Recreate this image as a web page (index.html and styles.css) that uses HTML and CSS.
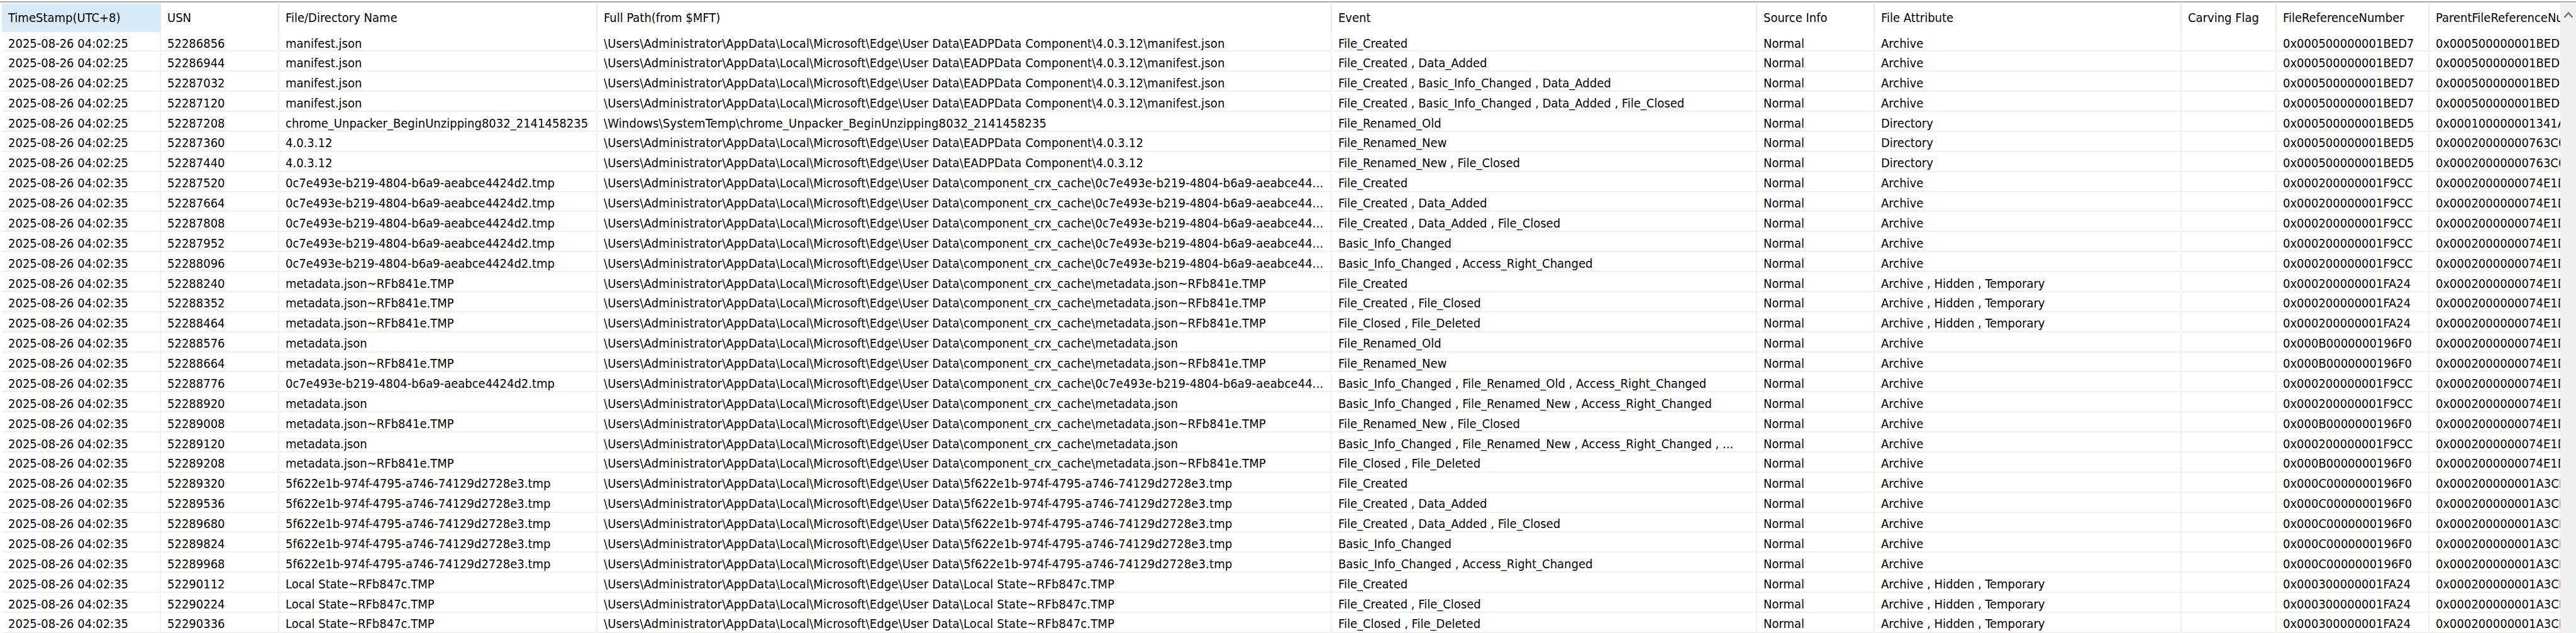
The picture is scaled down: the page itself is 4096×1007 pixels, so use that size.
FILE: index.html
```html
<!DOCTYPE html>
<html lang="en">
<head>
<meta charset="utf-8">
<title>USN Journal</title>
<link rel="stylesheet" href="styles.css">
</head>
<body>
<div class="topline"></div>
<div class="view">
<div class="table">
<div class="row head"><div class="cell sel">TimeStamp(UTC+8)</div><div class="cell">USN</div><div class="cell">File/Directory Name</div><div class="cell">Full Path(from $MFT)</div><div class="cell">Event</div><div class="cell">Source Info</div><div class="cell">File Attribute</div><div class="cell">Carving Flag</div><div class="cell">FileReferenceNumber</div><div class="cell">ParentFileReferenceNumber</div></div>
<div class="row"><div class="cell">2025-08-26 04:02:25</div><div class="cell">52286856</div><div class="cell">manifest.json</div><div class="cell">\Users\Administrator\AppData\Local\Microsoft\Edge\User Data\EADPData Component\4.0.3.12\manifest.json</div><div class="cell">File_Created</div><div class="cell">Normal</div><div class="cell">Archive</div><div class="cell"></div><div class="cell">0x000500000001BED7</div><div class="cell">0x000500000001BED5</div></div>
<div class="row"><div class="cell">2025-08-26 04:02:25</div><div class="cell">52286944</div><div class="cell">manifest.json</div><div class="cell">\Users\Administrator\AppData\Local\Microsoft\Edge\User Data\EADPData Component\4.0.3.12\manifest.json</div><div class="cell">File_Created , Data_Added</div><div class="cell">Normal</div><div class="cell">Archive</div><div class="cell"></div><div class="cell">0x000500000001BED7</div><div class="cell">0x000500000001BED5</div></div>
<div class="row"><div class="cell">2025-08-26 04:02:25</div><div class="cell">52287032</div><div class="cell">manifest.json</div><div class="cell">\Users\Administrator\AppData\Local\Microsoft\Edge\User Data\EADPData Component\4.0.3.12\manifest.json</div><div class="cell">File_Created , Basic_Info_Changed , Data_Added</div><div class="cell">Normal</div><div class="cell">Archive</div><div class="cell"></div><div class="cell">0x000500000001BED7</div><div class="cell">0x000500000001BED5</div></div>
<div class="row"><div class="cell">2025-08-26 04:02:25</div><div class="cell">52287120</div><div class="cell">manifest.json</div><div class="cell">\Users\Administrator\AppData\Local\Microsoft\Edge\User Data\EADPData Component\4.0.3.12\manifest.json</div><div class="cell">File_Created , Basic_Info_Changed , Data_Added , File_Closed</div><div class="cell">Normal</div><div class="cell">Archive</div><div class="cell"></div><div class="cell">0x000500000001BED7</div><div class="cell">0x000500000001BED5</div></div>
<div class="row"><div class="cell">2025-08-26 04:02:25</div><div class="cell">52287208</div><div class="cell">chrome_Unpacker_BeginUnzipping8032_2141458235</div><div class="cell">\Windows\SystemTemp\chrome_Unpacker_BeginUnzipping8032_2141458235</div><div class="cell">File_Renamed_Old</div><div class="cell">Normal</div><div class="cell">Directory</div><div class="cell"></div><div class="cell">0x000500000001BED5</div><div class="cell">0x000100000001341A</div></div>
<div class="row"><div class="cell">2025-08-26 04:02:25</div><div class="cell">52287360</div><div class="cell">4.0.3.12</div><div class="cell">\Users\Administrator\AppData\Local\Microsoft\Edge\User Data\EADPData Component\4.0.3.12</div><div class="cell">File_Renamed_New</div><div class="cell">Normal</div><div class="cell">Directory</div><div class="cell"></div><div class="cell">0x000500000001BED5</div><div class="cell">0x00020000000763C0</div></div>
<div class="row"><div class="cell">2025-08-26 04:02:25</div><div class="cell">52287440</div><div class="cell">4.0.3.12</div><div class="cell">\Users\Administrator\AppData\Local\Microsoft\Edge\User Data\EADPData Component\4.0.3.12</div><div class="cell">File_Renamed_New , File_Closed</div><div class="cell">Normal</div><div class="cell">Directory</div><div class="cell"></div><div class="cell">0x000500000001BED5</div><div class="cell">0x00020000000763C0</div></div>
<div class="row"><div class="cell">2025-08-26 04:02:35</div><div class="cell">52287520</div><div class="cell">0c7e493e-b219-4804-b6a9-aeabce4424d2.tmp</div><div class="cell">\Users\Administrator\AppData\Local\Microsoft\Edge\User Data\component_crx_cache\0c7e493e-b219-4804-b6a9-aeabce44...</div><div class="cell">File_Created</div><div class="cell">Normal</div><div class="cell">Archive</div><div class="cell"></div><div class="cell">0x000200000001F9CC</div><div class="cell">0x0002000000074E1D</div></div>
<div class="row"><div class="cell">2025-08-26 04:02:35</div><div class="cell">52287664</div><div class="cell">0c7e493e-b219-4804-b6a9-aeabce4424d2.tmp</div><div class="cell">\Users\Administrator\AppData\Local\Microsoft\Edge\User Data\component_crx_cache\0c7e493e-b219-4804-b6a9-aeabce44...</div><div class="cell">File_Created , Data_Added</div><div class="cell">Normal</div><div class="cell">Archive</div><div class="cell"></div><div class="cell">0x000200000001F9CC</div><div class="cell">0x0002000000074E1D</div></div>
<div class="row"><div class="cell">2025-08-26 04:02:35</div><div class="cell">52287808</div><div class="cell">0c7e493e-b219-4804-b6a9-aeabce4424d2.tmp</div><div class="cell">\Users\Administrator\AppData\Local\Microsoft\Edge\User Data\component_crx_cache\0c7e493e-b219-4804-b6a9-aeabce44...</div><div class="cell">File_Created , Data_Added , File_Closed</div><div class="cell">Normal</div><div class="cell">Archive</div><div class="cell"></div><div class="cell">0x000200000001F9CC</div><div class="cell">0x0002000000074E1D</div></div>
<div class="row"><div class="cell">2025-08-26 04:02:35</div><div class="cell">52287952</div><div class="cell">0c7e493e-b219-4804-b6a9-aeabce4424d2.tmp</div><div class="cell">\Users\Administrator\AppData\Local\Microsoft\Edge\User Data\component_crx_cache\0c7e493e-b219-4804-b6a9-aeabce44...</div><div class="cell">Basic_Info_Changed</div><div class="cell">Normal</div><div class="cell">Archive</div><div class="cell"></div><div class="cell">0x000200000001F9CC</div><div class="cell">0x0002000000074E1D</div></div>
<div class="row"><div class="cell">2025-08-26 04:02:35</div><div class="cell">52288096</div><div class="cell">0c7e493e-b219-4804-b6a9-aeabce4424d2.tmp</div><div class="cell">\Users\Administrator\AppData\Local\Microsoft\Edge\User Data\component_crx_cache\0c7e493e-b219-4804-b6a9-aeabce44...</div><div class="cell">Basic_Info_Changed , Access_Right_Changed</div><div class="cell">Normal</div><div class="cell">Archive</div><div class="cell"></div><div class="cell">0x000200000001F9CC</div><div class="cell">0x0002000000074E1D</div></div>
<div class="row"><div class="cell">2025-08-26 04:02:35</div><div class="cell">52288240</div><div class="cell">metadata.json~RFb841e.TMP</div><div class="cell">\Users\Administrator\AppData\Local\Microsoft\Edge\User Data\component_crx_cache\metadata.json~RFb841e.TMP</div><div class="cell">File_Created</div><div class="cell">Normal</div><div class="cell">Archive , Hidden , Temporary</div><div class="cell"></div><div class="cell">0x000200000001FA24</div><div class="cell">0x0002000000074E1D</div></div>
<div class="row"><div class="cell">2025-08-26 04:02:35</div><div class="cell">52288352</div><div class="cell">metadata.json~RFb841e.TMP</div><div class="cell">\Users\Administrator\AppData\Local\Microsoft\Edge\User Data\component_crx_cache\metadata.json~RFb841e.TMP</div><div class="cell">File_Created , File_Closed</div><div class="cell">Normal</div><div class="cell">Archive , Hidden , Temporary</div><div class="cell"></div><div class="cell">0x000200000001FA24</div><div class="cell">0x0002000000074E1D</div></div>
<div class="row"><div class="cell">2025-08-26 04:02:35</div><div class="cell">52288464</div><div class="cell">metadata.json~RFb841e.TMP</div><div class="cell">\Users\Administrator\AppData\Local\Microsoft\Edge\User Data\component_crx_cache\metadata.json~RFb841e.TMP</div><div class="cell">File_Closed , File_Deleted</div><div class="cell">Normal</div><div class="cell">Archive , Hidden , Temporary</div><div class="cell"></div><div class="cell">0x000200000001FA24</div><div class="cell">0x0002000000074E1D</div></div>
<div class="row"><div class="cell">2025-08-26 04:02:35</div><div class="cell">52288576</div><div class="cell">metadata.json</div><div class="cell">\Users\Administrator\AppData\Local\Microsoft\Edge\User Data\component_crx_cache\metadata.json</div><div class="cell">File_Renamed_Old</div><div class="cell">Normal</div><div class="cell">Archive</div><div class="cell"></div><div class="cell">0x000B0000000196F0</div><div class="cell">0x0002000000074E1D</div></div>
<div class="row"><div class="cell">2025-08-26 04:02:35</div><div class="cell">52288664</div><div class="cell">metadata.json~RFb841e.TMP</div><div class="cell">\Users\Administrator\AppData\Local\Microsoft\Edge\User Data\component_crx_cache\metadata.json~RFb841e.TMP</div><div class="cell">File_Renamed_New</div><div class="cell">Normal</div><div class="cell">Archive</div><div class="cell"></div><div class="cell">0x000B0000000196F0</div><div class="cell">0x0002000000074E1D</div></div>
<div class="row"><div class="cell">2025-08-26 04:02:35</div><div class="cell">52288776</div><div class="cell">0c7e493e-b219-4804-b6a9-aeabce4424d2.tmp</div><div class="cell">\Users\Administrator\AppData\Local\Microsoft\Edge\User Data\component_crx_cache\0c7e493e-b219-4804-b6a9-aeabce44...</div><div class="cell">Basic_Info_Changed , File_Renamed_Old , Access_Right_Changed</div><div class="cell">Normal</div><div class="cell">Archive</div><div class="cell"></div><div class="cell">0x000200000001F9CC</div><div class="cell">0x0002000000074E1D</div></div>
<div class="row"><div class="cell">2025-08-26 04:02:35</div><div class="cell">52288920</div><div class="cell">metadata.json</div><div class="cell">\Users\Administrator\AppData\Local\Microsoft\Edge\User Data\component_crx_cache\metadata.json</div><div class="cell">Basic_Info_Changed , File_Renamed_New , Access_Right_Changed</div><div class="cell">Normal</div><div class="cell">Archive</div><div class="cell"></div><div class="cell">0x000200000001F9CC</div><div class="cell">0x0002000000074E1D</div></div>
<div class="row"><div class="cell">2025-08-26 04:02:35</div><div class="cell">52289008</div><div class="cell">metadata.json~RFb841e.TMP</div><div class="cell">\Users\Administrator\AppData\Local\Microsoft\Edge\User Data\component_crx_cache\metadata.json~RFb841e.TMP</div><div class="cell">File_Renamed_New , File_Closed</div><div class="cell">Normal</div><div class="cell">Archive</div><div class="cell"></div><div class="cell">0x000B0000000196F0</div><div class="cell">0x0002000000074E1D</div></div>
<div class="row"><div class="cell">2025-08-26 04:02:35</div><div class="cell">52289120</div><div class="cell">metadata.json</div><div class="cell">\Users\Administrator\AppData\Local\Microsoft\Edge\User Data\component_crx_cache\metadata.json</div><div class="cell">Basic_Info_Changed , File_Renamed_New , Access_Right_Changed , ...</div><div class="cell">Normal</div><div class="cell">Archive</div><div class="cell"></div><div class="cell">0x000200000001F9CC</div><div class="cell">0x0002000000074E1D</div></div>
<div class="row"><div class="cell">2025-08-26 04:02:35</div><div class="cell">52289208</div><div class="cell">metadata.json~RFb841e.TMP</div><div class="cell">\Users\Administrator\AppData\Local\Microsoft\Edge\User Data\component_crx_cache\metadata.json~RFb841e.TMP</div><div class="cell">File_Closed , File_Deleted</div><div class="cell">Normal</div><div class="cell">Archive</div><div class="cell"></div><div class="cell">0x000B0000000196F0</div><div class="cell">0x0002000000074E1D</div></div>
<div class="row"><div class="cell">2025-08-26 04:02:35</div><div class="cell">52289320</div><div class="cell">5f622e1b-974f-4795-a746-74129d2728e3.tmp</div><div class="cell">\Users\Administrator\AppData\Local\Microsoft\Edge\User Data\5f622e1b-974f-4795-a746-74129d2728e3.tmp</div><div class="cell">File_Created</div><div class="cell">Normal</div><div class="cell">Archive</div><div class="cell"></div><div class="cell">0x000C0000000196F0</div><div class="cell">0x000200000001A3CF</div></div>
<div class="row"><div class="cell">2025-08-26 04:02:35</div><div class="cell">52289536</div><div class="cell">5f622e1b-974f-4795-a746-74129d2728e3.tmp</div><div class="cell">\Users\Administrator\AppData\Local\Microsoft\Edge\User Data\5f622e1b-974f-4795-a746-74129d2728e3.tmp</div><div class="cell">File_Created , Data_Added</div><div class="cell">Normal</div><div class="cell">Archive</div><div class="cell"></div><div class="cell">0x000C0000000196F0</div><div class="cell">0x000200000001A3CF</div></div>
<div class="row"><div class="cell">2025-08-26 04:02:35</div><div class="cell">52289680</div><div class="cell">5f622e1b-974f-4795-a746-74129d2728e3.tmp</div><div class="cell">\Users\Administrator\AppData\Local\Microsoft\Edge\User Data\5f622e1b-974f-4795-a746-74129d2728e3.tmp</div><div class="cell">File_Created , Data_Added , File_Closed</div><div class="cell">Normal</div><div class="cell">Archive</div><div class="cell"></div><div class="cell">0x000C0000000196F0</div><div class="cell">0x000200000001A3CF</div></div>
<div class="row"><div class="cell">2025-08-26 04:02:35</div><div class="cell">52289824</div><div class="cell">5f622e1b-974f-4795-a746-74129d2728e3.tmp</div><div class="cell">\Users\Administrator\AppData\Local\Microsoft\Edge\User Data\5f622e1b-974f-4795-a746-74129d2728e3.tmp</div><div class="cell">Basic_Info_Changed</div><div class="cell">Normal</div><div class="cell">Archive</div><div class="cell"></div><div class="cell">0x000C0000000196F0</div><div class="cell">0x000200000001A3CF</div></div>
<div class="row"><div class="cell">2025-08-26 04:02:35</div><div class="cell">52289968</div><div class="cell">5f622e1b-974f-4795-a746-74129d2728e3.tmp</div><div class="cell">\Users\Administrator\AppData\Local\Microsoft\Edge\User Data\5f622e1b-974f-4795-a746-74129d2728e3.tmp</div><div class="cell">Basic_Info_Changed , Access_Right_Changed</div><div class="cell">Normal</div><div class="cell">Archive</div><div class="cell"></div><div class="cell">0x000C0000000196F0</div><div class="cell">0x000200000001A3CF</div></div>
<div class="row"><div class="cell">2025-08-26 04:02:35</div><div class="cell">52290112</div><div class="cell">Local State~RFb847c.TMP</div><div class="cell">\Users\Administrator\AppData\Local\Microsoft\Edge\User Data\Local State~RFb847c.TMP</div><div class="cell">File_Created</div><div class="cell">Normal</div><div class="cell">Archive , Hidden , Temporary</div><div class="cell"></div><div class="cell">0x000300000001FA24</div><div class="cell">0x000200000001A3CF</div></div>
<div class="row"><div class="cell">2025-08-26 04:02:35</div><div class="cell">52290224</div><div class="cell">Local State~RFb847c.TMP</div><div class="cell">\Users\Administrator\AppData\Local\Microsoft\Edge\User Data\Local State~RFb847c.TMP</div><div class="cell">File_Created , File_Closed</div><div class="cell">Normal</div><div class="cell">Archive , Hidden , Temporary</div><div class="cell"></div><div class="cell">0x000300000001FA24</div><div class="cell">0x000200000001A3CF</div></div>
<div class="row"><div class="cell">2025-08-26 04:02:35</div><div class="cell">52290336</div><div class="cell">Local State~RFb847c.TMP</div><div class="cell">\Users\Administrator\AppData\Local\Microsoft\Edge\User Data\Local State~RFb847c.TMP</div><div class="cell">File_Closed , File_Deleted</div><div class="cell">Normal</div><div class="cell">Archive , Hidden , Temporary</div><div class="cell"></div><div class="cell">0x000300000001FA24</div><div class="cell">0x000200000001A3CF</div></div>
</div>
<div class="scrollbar"><svg class="chev" width="16" height="11" viewBox="0 0 16 11"><path d="M1.5 9.5 8 2.5l6.5 7" fill="none" stroke="#606060" stroke-width="2"/></svg></div>
</div>
</body>
</html>
```

FILE: styles.css
```css
html, body {
  margin: 0;
  padding: 0;
  height: 100%;
  overflow: hidden;
  background: #fff;
}
body {
  font-family: "DejaVu Sans Condensed", "DejaVu Sans", sans-serif;
  font-stretch: condensed;
  font-size: 20px;
  color: #000;
}
.topline {
  height: 2px;
  margin-top: 2px;
  background: #a5a8ad;
}
.view {
  display: flex;
  height: calc(100% - 4px);
  padding-top: 2px;
  box-sizing: border-box;
}
.table {
  flex: 1;
  min-width: 0;
  padding-left: 3px;
  overflow: hidden;
}
.row {
  display: grid;
  grid-template-columns: 253px 188px 506px 1168px 676px 187px 488px 151px 243px 209px;
  height: 31.88px;
  box-sizing: border-box;
  border-bottom: 2px solid #f0f0f0;
}
.row.head {
  height: 44.5px;
  border-bottom: 0;
}
.row.head + .row {
  padding-top: 1px;
}
.cell {
  padding: 5.5px 0 0 10px;
  line-height: 24px;
  overflow: hidden;
  white-space: nowrap;
  border-right: 2px solid #f0f0f0;
  box-sizing: border-box;
}
.head .cell {
  padding-top: 10px;
  border-right-color: #e8e8e8;
}
.head .cell.sel {
  background: #d9ebf9;
  border-right-color: #d9ebf9;
}
.row:not(.head) .cell:nth-child(4) {
  letter-spacing: 0.15px;
}
.row .cell:last-child {
  border-right: 0;
}
.scrollbar {
  flex: 0 0 25px;
  background: #f0f0f0;
  display: flex;
  justify-content: center;
  align-items: flex-start;
  padding-top: 12px;
  box-sizing: border-box;
}
```
